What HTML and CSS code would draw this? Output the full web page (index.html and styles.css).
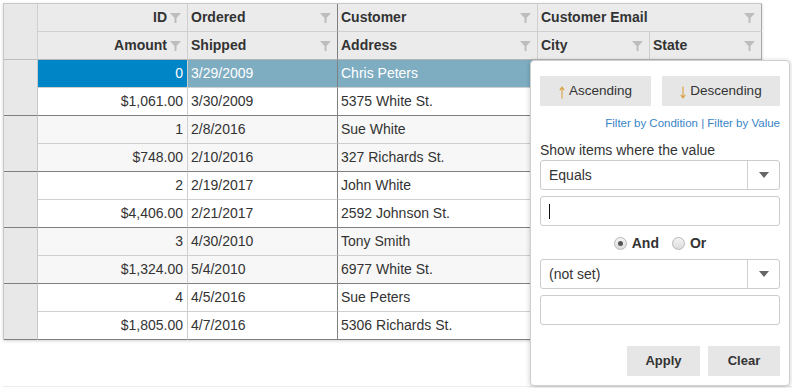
FILE: index.html
```html
<!DOCTYPE html>
<html>
<head>
<meta charset="utf-8">
<link rel="stylesheet" href="styles.css">
</head>
<body>
<div class="page">
  <div class="grid">
    <div class="corner"></div>
    <div class="hc right sep-light">ID<svg class="fi" viewBox="0 0 11 10"><polygon points="0,0 11,0 6.5,5 6.5,10 4.5,10 4.5,5"/></svg></div>
    <div class="hc sep-dark"><span class="ht">Ordered</span><svg class="fi" viewBox="0 0 11 10"><polygon points="0,0 11,0 6.5,5 6.5,10 4.5,10 4.5,5"/></svg></div>
    <div class="hc sep-light"><span class="ht">Customer</span><svg class="fi" viewBox="0 0 11 10"><polygon points="0,0 11,0 6.5,5 6.5,10 4.5,10 4.5,5"/></svg></div>
    <div class="hc span2 sep-mid"><span class="ht">Customer Email</span><svg class="fi" viewBox="0 0 11 10"><polygon points="0,0 11,0 6.5,5 6.5,10 4.5,10 4.5,5"/></svg></div>
    <div class="hc hb right sep-light">Amount<svg class="fi" viewBox="0 0 11 10"><polygon points="0,0 11,0 6.5,5 6.5,10 4.5,10 4.5,5"/></svg></div>
    <div class="hc hb sep-dark"><span class="ht">Shipped</span><svg class="fi" viewBox="0 0 11 10"><polygon points="0,0 11,0 6.5,5 6.5,10 4.5,10 4.5,5"/></svg></div>
    <div class="hc hb sep-light"><span class="ht">Address</span><svg class="fi" viewBox="0 0 11 10"><polygon points="0,0 11,0 6.5,5 6.5,10 4.5,10 4.5,5"/></svg></div>
    <div class="hc hb sep-light"><span class="ht">City</span><svg class="fi" viewBox="0 0 11 10"><polygon points="0,0 11,0 6.5,5 6.5,10 4.5,10 4.5,5"/></svg></div>
    <div class="hc hb sep-mid"><span class="ht">State</span><svg class="fi" viewBox="0 0 11 10"><polygon points="0,0 11,0 6.5,5 6.5,10 4.5,10 4.5,5"/></svg></div>

    <!-- group 0 (selected) -->
    <div class="rh"></div>
    <div class="c ra sel-id right sep-light">0</div>
    <div class="c ra sel sep-dark">3/29/2009</div>
    <div class="c ra sel sep-dark">Chris Peters</div>
    <div class="c ra sel span2 sep-mid"></div>
    <div class="c rb right sep-light">$1,061.00</div>
    <div class="c rb sep-dark">3/30/2009</div>
    <div class="c rb sep-dark">5375 White St.</div>
    <div class="c rb sep-light"></div>
    <div class="c rb sep-mid"></div>

    <!-- group 1 -->
    <div class="rh"></div>
    <div class="c ra alt right sep-light">1</div>
    <div class="c ra alt sep-dark">2/8/2016</div>
    <div class="c ra alt sep-dark">Sue White</div>
    <div class="c ra alt span2 sep-mid"></div>
    <div class="c rb alt right sep-light">$748.00</div>
    <div class="c rb alt sep-dark">2/10/2016</div>
    <div class="c rb alt sep-dark">327 Richards St.</div>
    <div class="c rb alt sep-light"></div>
    <div class="c rb alt sep-mid"></div>

    <!-- group 2 -->
    <div class="rh"></div>
    <div class="c ra right sep-light">2</div>
    <div class="c ra sep-dark">2/19/2017</div>
    <div class="c ra sep-dark">John White</div>
    <div class="c ra span2 sep-mid"></div>
    <div class="c rb right sep-light">$4,406.00</div>
    <div class="c rb sep-dark">2/21/2017</div>
    <div class="c rb sep-dark">2592 Johnson St.</div>
    <div class="c rb sep-light"></div>
    <div class="c rb sep-mid"></div>

    <!-- group 3 -->
    <div class="rh"></div>
    <div class="c ra alt right sep-light">3</div>
    <div class="c ra alt sep-dark">4/30/2010</div>
    <div class="c ra alt sep-dark">Tony Smith</div>
    <div class="c ra alt span2 sep-mid"></div>
    <div class="c rb alt right sep-light">$1,324.00</div>
    <div class="c rb alt sep-dark">5/4/2010</div>
    <div class="c rb alt sep-dark">6977 White St.</div>
    <div class="c rb alt sep-light"></div>
    <div class="c rb alt sep-mid"></div>

    <!-- group 4 -->
    <div class="rh"></div>
    <div class="c ra right sep-light">4</div>
    <div class="c ra sep-dark">4/5/2016</div>
    <div class="c ra sep-dark">Sue Peters</div>
    <div class="c ra span2 sep-mid"></div>
    <div class="c rb right sep-light">$1,805.00</div>
    <div class="c rb sep-dark">4/7/2016</div>
    <div class="c rb sep-dark">5306 Richards St.</div>
    <div class="c rb sep-light"></div>
    <div class="c rb sep-mid"></div>
  </div>
  <div class="rule"></div>

  <div class="popup">
    <div class="sort-row">
      <div class="btn asc"><svg class="arrow" viewBox="0 0 6 13"><path d="M3 12.5V1.2M0.8 4.2L3 1.2L5.2 4.2"/></svg>Ascending</div>
      <div class="btn desc"><svg class="arrow" viewBox="0 0 6 13"><path d="M3 0.5V11.8M0.8 8.8L3 11.8L5.2 8.8"/></svg>Descending</div>
    </div>
    <div class="links"><span class="lk">Filter by Condition</span> | <span class="lk">Filter by Value</span></div>
    <div class="label">Show items where the value</div>
    <div class="select"><span class="sv">Equals</span><span class="dd"><span class="tri"></span></span></div>
    <div class="input first"><span class="caret"></span></div>
    <div class="radios">
      <span class="radio checked"></span><span class="rl">And</span>
      <span class="radio"></span><span class="rl">Or</span>
    </div>
    <div class="select second"><span class="sv">(not set)</span><span class="dd"><span class="tri"></span></span></div>
    <div class="input"></div>
    <div class="actions">
      <div class="btn apply">Apply</div>
      <div class="btn clear">Clear</div>
    </div>
  </div>
</div>
</body>
</html>
```

FILE: styles.css
```css
html, body {
  margin: 0;
  padding: 0;
  background: #fff;
}
body {
  font-family: "Liberation Sans", Arial, sans-serif;
  color: #333;
  width: 792px;
  height: 388px;
  overflow: hidden;
  position: relative;
}
.page {
  padding: 3px 0 0 3px;
}
.grid {
  display: grid;
  width: max-content;
  grid-template-columns: 34px 150px 150px 200px 112px 112px;
  grid-auto-rows: 28px;
  border-left: 1px solid #c8c8c8;
  border-top: 1px solid #c8c8c8;
  box-shadow: 0 1px 3px rgba(0,0,0,0.18);
}
.grid > div {
  box-sizing: border-box;
  border-right: 1px solid #cfcfcf;
  border-bottom: 1px solid #cfcfcf;
  font-size: 14px;
  line-height: 27px;
  white-space: nowrap;
  overflow: hidden;
}
.corner {
  grid-column: 1;
  grid-row: span 2;
  background: #e8e8e8;
  border-bottom-color: #bdbdbd !important;
}
.rh {
  grid-column: 1;
  grid-row: span 2;
  background: #e8e8e8;
  border-bottom-color: #7f7f7f !important;
  border-right-color: #c8c8c8 !important;
}
.span2 { grid-column: span 2; }
.hc {
  background: #ebebeb;
  font-weight: bold;
  color: #333;
  display: flex;
  align-items: center;
  padding: 0 6px 0 3px;
}
.hc .ht { flex: 1; }
.hc.right { justify-content: flex-end; }
.hc.right .fi { margin-left: 3px; }
.hc.hb { border-bottom-color: #b5b5b5 !important; }
.fi {
  width: 11px;
  height: 10px;
  fill: #bdbdbd;
  flex: none;
}
.sep-light { border-right-color: #cfcfcf !important; }
.sep-dark { border-right-color: #808080 !important; }
.sep-mid { border-right-color: #a8a8a8 !important; }
.c {
  padding: 0 4px 0 3px;
  background: #fff;
  color: #333;
}
.c.right { text-align: right; }
.c.ra { border-bottom-color: #cfcfcf !important; }
.c.rb { border-bottom-color: #7f7f7f !important; }
.c.alt { background: #f7f7f7; }
.c.sel { background: #7eadc2; color: #fff; }
.c.sel-id { background: #0085c7; color: #fff; }
.rule {
  margin-top: 46px;
  border-top: 1px solid #ececec;
}

/* popup */
.popup {
  position: absolute;
  left: 530px;
  top: 60px;
  width: 260px;
  box-sizing: border-box;
  border: 1px solid #cfcfcf;
  border-radius: 4px;
  background: #fff;
  box-shadow: 0 1px 5px rgba(0,0,0,0.22);
  padding: 15px 9px 9px 9px;
  display: flex;
  flex-direction: column;
}
.btn {
  background: #e6e6e6;
  height: 30px;
  line-height: 30px;
  text-align: center;
  font-size: 13px;
  color: #333;
}
.sort-row {
  display: flex;
  justify-content: space-between;
}
.sort-row .btn {
  display: flex;
  align-items: center;
  justify-content: center;
  font-size: 13.5px;
}
.btn.asc { width: 111px; }
.btn.desc { width: 118px; }
.arrow {
  width: 6px;
  height: 13px;
  margin-right: 4px;
  margin-top: 3px;
  fill: none;
  stroke: #d9a040;
  stroke-width: 1.1;
}
.links {
  margin-top: 10px;
  text-align: right;
  font-size: 11.5px;
  line-height: 14px;
  color: #3d7cc0;
}
.lk { color: #3a84c6; }
.label {
  margin-top: 12px;
  font-size: 14px;
  line-height: 16px;
  color: #333;
}
.select {
  margin-top: 2px;
  height: 30px;
  box-sizing: border-box;
  border: 1px solid #cccccc;
  border-radius: 3px;
  display: flex;
  align-items: center;
  font-size: 14px;
  color: #333;
}
.select.second { margin-top: 8px; }
.select .sv {
  flex: 1;
  padding-left: 8px;
}
.select .dd {
  width: 31px;
  height: 100%;
  border-left: 1px solid #d0d0d0;
  display: flex;
  align-items: center;
  justify-content: center;
}
.tri {
  width: 0;
  height: 0;
  border-left: 5px solid transparent;
  border-right: 5px solid transparent;
  border-top: 6px solid #666;
}
.input {
  margin-top: 6px;
  height: 30px;
  box-sizing: border-box;
  border: 1px solid #cccccc;
  border-radius: 3px;
  display: flex;
  align-items: center;
}
.caret {
  margin-left: 8px;
  width: 1px;
  height: 15px;
  background: #111;
}
.radios {
  margin-top: 9px;
  height: 16px;
  display: flex;
  align-items: center;
  justify-content: center;
  font-size: 14px;
  font-weight: bold;
  color: #333;
}
.radio {
  width: 11px;
  height: 11px;
  border-radius: 50%;
  border: 1px solid #b8b8b8;
  background: linear-gradient(#f4f4f4, #dcdcdc);
  position: relative;
  flex: none;
}
.radio.checked::after {
  content: "";
  position: absolute;
  left: 3px;
  top: 3px;
  width: 5px;
  height: 5px;
  border-radius: 50%;
  background: #555;
}
.rl { margin-left: 5px; margin-right: 13px; }
.rl:last-child { margin-right: 0; }
.actions {
  margin-top: 21px;
  display: flex;
  justify-content: flex-end;
  gap: 8px;
}
.btn.apply { width: 73px; font-weight: bold; font-size: 13px; }
.btn.clear { width: 72px; font-weight: bold; font-size: 13px; }
```
